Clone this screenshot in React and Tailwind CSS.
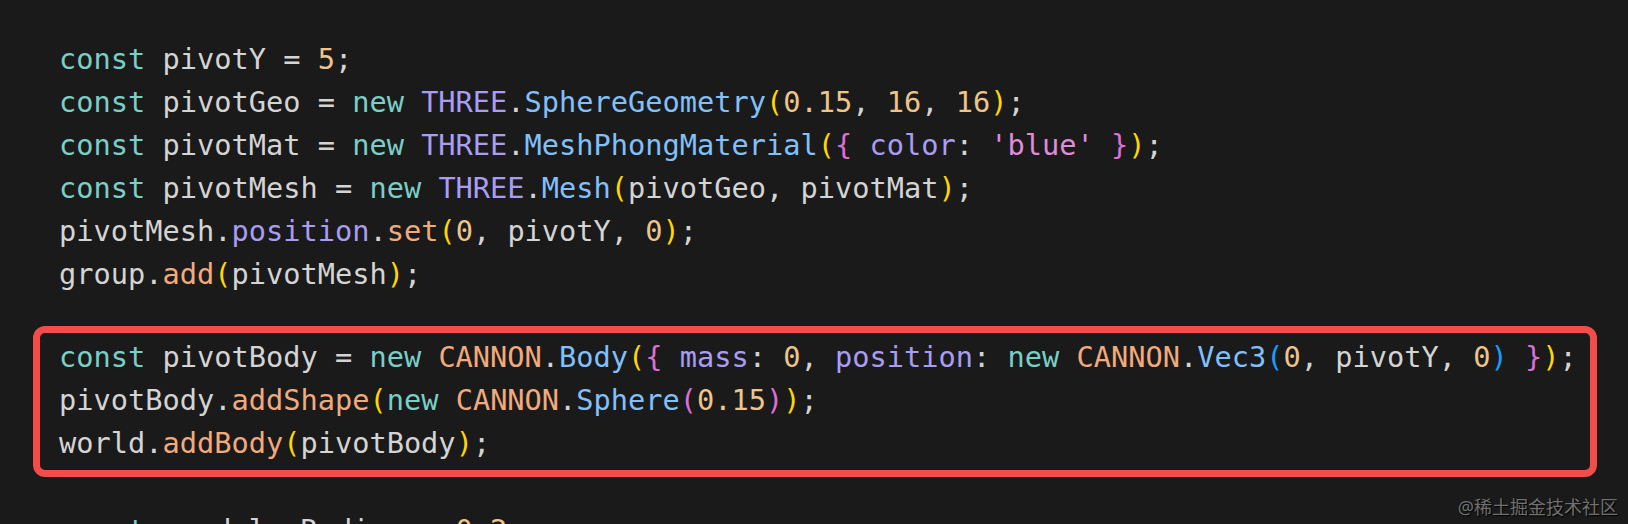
import React from "react";

const C = {
  k: "text-[#7acfc6]",
  i: "text-[#d4d4d4]",
  n: "text-[#efc48b]",
  p: "text-[#a99df2]",
  b: "text-[#82c0fa]",
  o: "text-[#f2aa7d]",
  s: "text-[#e08cd8]",
  y: "text-[#ffd700]",
  pk: "text-[#da70d6]",
  bl: "text-[#179fff]",
};

const topLines = [
  [["const", "k"], [" pivotY = ", "i"], ["5", "n"], [";", "i"]],
  [["const", "k"], [" pivotGeo = ", "i"], ["new", "k"], [" ", "i"], ["THREE", "p"], [".", "i"], ["SphereGeometry", "b"], ["(", "y"], ["0.15", "n"], [", ", "i"], ["16", "n"], [", ", "i"], ["16", "n"], [")", "y"], [";", "i"]],
  [["const", "k"], [" pivotMat = ", "i"], ["new", "k"], [" ", "i"], ["THREE", "p"], [".", "i"], ["MeshPhongMaterial", "b"], ["(", "y"], ["{", "pk"], [" ", "i"], ["color", "p"], [": ", "i"], ["'blue'", "s"], [" ", "i"], ["}", "pk"], [")", "y"], [";", "i"]],
  [["const", "k"], [" pivotMesh = ", "i"], ["new", "k"], [" ", "i"], ["THREE", "p"], [".", "i"], ["Mesh", "b"], ["(", "y"], ["pivotGeo, pivotMat", "i"], [")", "y"], [";", "i"]],
  [["pivotMesh", "i"], [".", "i"], ["position", "p"], [".", "i"], ["set", "o"], ["(", "y"], ["0", "n"], [", pivotY, ", "i"], ["0", "n"], [")", "y"], [";", "i"]],
  [["group", "i"], [".", "i"], ["add", "o"], ["(", "y"], ["pivotMesh", "i"], [")", "y"], [";", "i"]],
];

const boxLines = [
  [["const", "k"], [" pivotBody = ", "i"], ["new", "k"], [" ", "i"], ["CANNON", "o"], [".", "i"], ["Body", "b"], ["(", "y"], ["{", "pk"], [" ", "i"], ["mass", "p"], [": ", "i"], ["0", "n"], [", ", "i"], ["position", "p"], [": ", "i"], ["new", "k"], [" ", "i"], ["CANNON", "o"], [".", "i"], ["Vec3", "b"], ["(", "bl"], ["0", "n"], [", pivotY, ", "i"], ["0", "n"], [")", "bl"], [" ", "i"], ["}", "pk"], [")", "y"], [";", "i"]],
  [["pivotBody", "i"], [".", "i"], ["addShape", "o"], ["(", "y"], ["new", "k"], [" ", "i"], ["CANNON", "o"], [".", "i"], ["Sphere", "b"], ["(", "pk"], ["0.15", "n"], [")", "pk"], [")", "y"], [";", "i"]],
  [["world", "i"], [".", "i"], ["addBody", "o"], ["(", "y"], ["pivotBody", "i"], [")", "y"], [";", "i"]],
];

const lastLine = [["const", "k"], [" pendulumRadius = ", "i"], ["0.2", "n"], [";", "i"]];

const Line = ({ tokens, className = "" }) => (
  <div className={`h-[43px] leading-[43px] whitespace-pre ${className}`}>
    {tokens.map(([text, c], idx) => (
      <span key={idx} className={C[c]}>
        {text}
      </span>
    ))}
  </div>
);

const App = () => {
  return (
    <div
      className="relative w-[1628px] h-[524px] overflow-hidden bg-[#1a1a1a] pt-[38px] text-[28.65px]"
      style={{ fontFamily: '"DejaVu Sans Mono", monospace' }}
    >
      {topLines.map((tokens, idx) => (
        <Line key={idx} tokens={tokens} className="pl-[59px]" />
      ))}

      {/* highlighted block */}
      <div className="mt-[30px] ml-[33px] mr-[31px] pl-[19px] pt-[3px] pb-[5px] border-[7px] border-[#f44b4b] rounded-[12px]">
        {boxLines.map((tokens, idx) => (
          <Line key={idx} tokens={tokens} />
        ))}
      </div>

      <Line tokens={lastLine} className="pl-[59px] mt-[32px]" />

      <div
        className="absolute right-[10px] bottom-[6px] text-[18px] leading-[22px] text-[#707070] [text-shadow:1px_1px_1px_#000]"
        style={{ fontFamily: '"Noto Sans", "Noto Sans CJK SC", sans-serif' }}
      >
        @稀土掘金技术社区
      </div>
    </div>
  );
};

export default App;
